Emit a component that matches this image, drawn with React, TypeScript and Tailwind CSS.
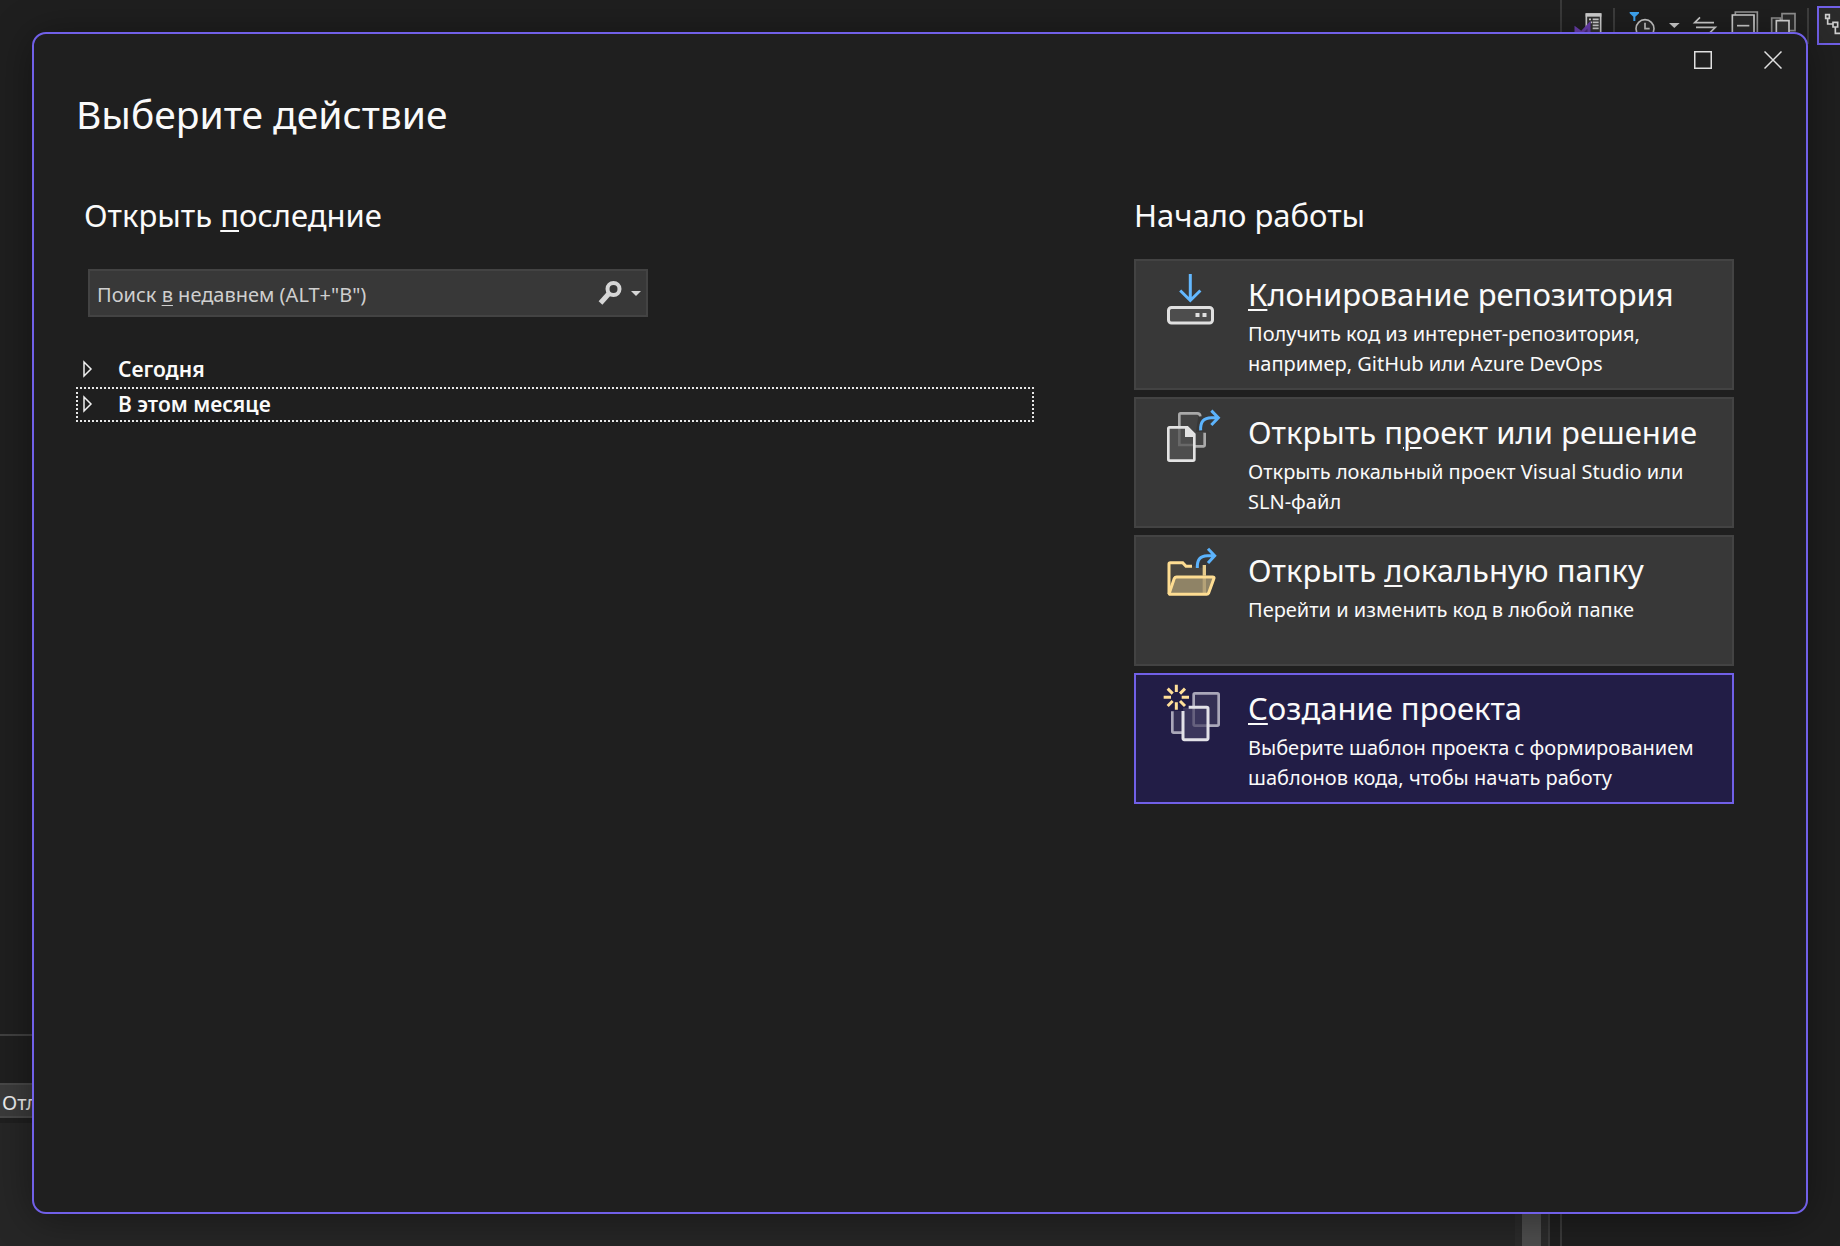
import { useState, type ReactNode } from 'react'

function Key({ children }: { children: ReactNode }) {
  return <span className="underline decoration-2 underline-offset-[3px]">{children}</span>
}

function CloneIcon() {
  return (
    <svg viewBox="0 0 60 60" className="h-[60px] w-[60px]" fill="none">
      <path d="M28.3 4v26.5M18.2 20.5l10.1 10 10.1-10" stroke="#63b8ff" strokeWidth="3" />
      <rect x="6.5" y="37.5" width="44" height="15.5" rx="3" fill="#4d4d4d" stroke="#e0e0e0" strokeWidth="3" />
      <path d="M33.5 43h4v4h-4zM40.5 43h4v4h-4z" fill="#e0e0e0" />
    </svg>
  )
}

function OpenProjectIcon() {
  return (
    <svg viewBox="36 24 180 180" className="h-[60px] w-[60px]" fill="none">
      <path d="M88 41h58l-8 55h26v43H88z" fill="#434343" />
      <path d="M151 49q-1-9-9-9H92q-4 0-4 4v92q0 3 3 3h70q3 0 3-3v-38" stroke="#a9a9a9" strokeWidth="8" />
      <path d="M55 87q0-4 4-4h52l21 20v74q0 4-4 4H59q-4 0-4-4z" fill="#4d4d4d" />
      <path d="M88 84v51h44" stroke="#686868" strokeWidth="8" />
      <path d="M55 86q0-4 4-4h53l21 21v75q0 4-4 4H59q-4 0-4-4z" stroke="#e3e3e3" strokeWidth="8" />
      <path d="M105 82h9l20 21v8h-29z" fill="#e3e3e3" />
      <path d="M152 91q-2-38 32-38h21M184 32l21 21-21 22" stroke="#5cb3fc" strokeWidth="9" />
    </svg>
  )
}

function OpenFolderIcon() {
  return (
    <svg viewBox="36 33 180 180" className="h-[60px] w-[60px]" fill="none">
      <path d="M57 84h41l10 10h55v30H76L57 176z" fill="#49463f" />
      <path d="M138 84h21v14h-21z" fill="#383838" />
      <path d="M163 90v32" stroke="#e5cb8c" strokeWidth="10" />
      <path d="M126 94h-18L98 83H61q-4 0-4 4v90" stroke="#fedd92" strokeWidth="9" />
      <path d="M76 126h116l-20 52H58z" fill="#8f8366" />
      <path d="M163 128v48" stroke="#b5a277" strokeWidth="10" />
      <path d="M80 126h108q5 0 4 4l-16 44q-2 4-6 4H61q-4 0-3-4l15-44q2-4 7-4z" stroke="#fedd92" strokeWidth="9" />
      <path d="M142 99q-2-37 30-37h22M174 41l20 21-20 22" stroke="#5cb3fc" strokeWidth="9" />
    </svg>
  )
}

function NewProjectIcon() {
  return (
    <svg viewBox="36 27 180 180" className="h-[60px] w-[60px]" fill="none">
      <path d="M68 108h30v64H68z" fill="#342f54" />
      <path d="M67 109v60q0 4 4 4h26" stroke="#aaa7b9" strokeWidth="8" />
      <rect x="131" y="55" width="75" height="97" rx="4" fill="#342f54" stroke="#aaa7b9" strokeWidth="8" />
      <rect x="99" y="98" width="75" height="96" rx="4" fill="#3b365c" />
      <path d="M131 98v50q0 4 4 4h39" stroke="#66617e" strokeWidth="8" />
      <path d="M116 97h54q4 0 4 4v89q0 4-4 4h-67q-4 0-4-4v-82" stroke="#e3e2e8" strokeWidth="9" />
      <path
        d="M79 51V29M79 82v22M63 67H41M95 67h22M68 56L53 41M90 56l15-15M68 78L53 93M90 78l15 15"
        stroke="#ffdf99"
        strokeWidth="9"
      />
    </svg>
  )
}

const actions = [
  {
    id: 'clone',
    icon: <CloneIcon />,
    title: <><Key>К</Key>лонирование репозитория</>,
    text: ['Получить код из интернет-репозитория,', 'например, GitHub или Azure DevOps'],
  },
  {
    id: 'project',
    icon: <OpenProjectIcon />,
    title: <>Открыть п<Key>р</Key>оект или решение</>,
    text: ['Открыть локальный проект Visual Studio или', 'SLN-файл'],
  },
  {
    id: 'folder',
    icon: <OpenFolderIcon />,
    title: <>Открыть <Key>л</Key>окальную папку</>,
    text: ['Перейти и изменить код в любой папке'],
  },
  {
    id: 'create',
    icon: <NewProjectIcon />,
    title: <><Key>С</Key>оздание проекта</>,
    text: ['Выберите шаблон проекта с формированием', 'шаблонов кода, чтобы начать работу'],
  },
]

const groups = ['Сегодня', 'В этом месяце']

function ToolbarSeparator() {
  return <span className="h-9 w-[2px] shrink-0 bg-[#3d3d3d]" />
}

function Toolbar() {
  return (
    <div className="flex h-[51px] items-center gap-2 overflow-hidden pl-[11px]">
      <button aria-label="Visual Studio" className="shrink-0">
        <svg viewBox="99 30 96 96" className="h-8 w-8" fill="none">
          <path d="M139 42h43v60h-43z" fill="#2f2f2f" stroke="#d0d0d0" strokeWidth="5" />
          <path d="M137 40h47v10h-47z" fill="#d0d0d0" />
          <path d="M147 58h6M158 58h18M152 67h4M158 67h18M158 76h18M158 85h18" stroke="#d0d0d0" strokeWidth="5" />
          <path d="M108 86l16 12 23-24v46l-23-20-16 12z" fill="#4c2f7d" stroke="#6b3fb0" strokeWidth="9" />
        </svg>
      </button>
      <ToolbarSeparator />
      <button aria-label="Фильтр" className="shrink-0">
        <svg viewBox="249 30 108 96" className="h-8 w-9" fill="none">
          <path d="M269 36h28v4l-11 10v13h-6V50l-11-10z" fill="#3fa7f5" />
          <circle cx="315" cy="86" r="27" fill="#2b2b2b" stroke="#c8c8c8" strokeWidth="5" />
          <path d="M315 68v18h14" stroke="#c8c8c8" strokeWidth="5" />
        </svg>
      </button>
      <button aria-label="Другие фильтры" className="shrink-0">
        <svg viewBox="381 30 42 96" className="h-8 w-[14px]">
          <path d="M387 69h32l-16 15z" fill="#cfcfcf" />
        </svg>
      </button>
      <button aria-label="Синхронизировать" className="shrink-0">
        <svg viewBox="447 30 96 96" className="h-8 w-8" fill="none" stroke="#d0d0d0" strokeWidth="5">
          <path d="M480 52l-16 16h58M468 82h58l-16 16" />
        </svg>
      </button>
      <button aria-label="Свернуть все" className="shrink-0">
        <svg viewBox="567 30 96 96" className="h-8 w-8" fill="none" stroke="#d0d0d0" strokeWidth="5">
          <path d="M586 44v-8h66v66h-8" stroke="#999999" />
          <path d="M577 45h65v66h-65z" fill="#2b2b2b" />
          <path d="M591 77h37" />
        </svg>
      </button>
      <button aria-label="Показать все файлы" className="shrink-0">
        <svg viewBox="687 30 90 96" className="h-8 w-[30px]" fill="none" strokeWidth="5">
          <path d="M695 54h26v50h-26z" fill="#2b2b2b" stroke="#8f8f8f" />
          <path d="M726 41h39v51h-39z" fill="#2b2b2b" stroke="#8f8f8f" />
          <path d="M709 62h38v52h-38z" fill="#333333" stroke="#d8d8d8" />
        </svg>
      </button>
      <ToolbarSeparator />
      <button aria-label="Вид" className="h-[39px] shrink-0 border-2 border-[#7160e8] bg-[#2b2b2b] px-[2px]">
        <svg viewBox="846 30 96 96" className="h-8 w-8" fill="none" stroke="#d0d0d0" strokeWidth="5">
          <path d="M860 44h11v11h-11zM882 67h14v14h-14zM866 55v17h16M889 81v19h14" />
        </svg>
      </button>
    </div>
  )
}

// The IDE window that stays visible around the dialog
function Ide() {
  return (
    <div className="absolute inset-0 flex gap-[10px] overflow-hidden bg-[#1f1f1f]">
      <div className="flex flex-1 items-end">
        <div className="flex-1">
          <div className="h-[49px] border-t-2 border-[#414141]" />
          <div className="mb-[5px] h-[35px] border-y-2 border-[#484848] bg-[#3b3b3b] pl-[2px] text-[20px] leading-[35px] text-[#f0f0f0]">
            Отладка
          </div>
          <div className="h-[123px] bg-[#262626]" />
        </div>
        <div className="flex h-[212px] w-[35px] justify-center border-r-2 border-[#3a3a3a] bg-[#2b2b2b]">
          <div className="w-[19px] bg-[#4d4d4d]" />
        </div>
      </div>
      <div className="w-[280px] border-l-2 border-[#3a3a3a]">
        <Toolbar />
      </div>
    </div>
  )
}

function Search() {
  const [query, setQuery] = useState('')

  return (
    <div className="relative ml-3 flex h-12 w-[560px] items-center border-2 border-[#434343] bg-[#383838] pr-1">
      <input
        id="recent-search"
        value={query}
        onChange={e => setQuery(e.target.value)}
        className="h-full min-w-0 flex-1 bg-transparent px-2 text-[20px] text-white outline-none"
      />
      {!query && (
        <label htmlFor="recent-search" className="absolute inset-y-0 left-[7px] cursor-text text-[20px] leading-[48px] text-[#cfcfcf]">
          Поиск <span className="underline decoration-1 underline-offset-[3px]">в</span> недавнем (ALT+"В")
        </label>
      )}
      <button aria-label="Найти">
        <svg viewBox="0 0 24 28" className="h-7 w-6" fill="none" stroke="#d6d6d6">
          <circle cx="15.5" cy="10" r="6" strokeWidth="4" />
          <path d="M11 14.500L2.500 24" strokeWidth="5" />
        </svg>
      </button>
      <button aria-label="Параметры поиска" className="ml-2">
        <svg viewBox="0 0 12 28" className="h-7 w-3">
          <path d="M1 12h10l-5 5z" fill="#d6d6d6" />
        </svg>
      </button>
    </div>
  )
}

function WindowButtons() {
  return (
    <div className="flex justify-end gap-1">
      <button aria-label="Развернуть" className="flex h-[52px] w-[66px] items-center justify-center">
        <svg viewBox="0 0 18 18" className="h-[18px] w-[18px]" fill="none" stroke="#e0e0e0" strokeWidth="1.500">
          <path d="M.75.75h16.500v16.500H.75z" />
        </svg>
      </button>
      <button aria-label="Закрыть" className="flex h-[52px] w-[66px] items-center justify-center">
        <svg viewBox="0 0 18 18" className="h-[18px] w-[18px]" fill="none" stroke="#e0e0e0" strokeWidth="1.500">
          <path d="M.5.5l17 17M17.500.5l-17 17" />
        </svg>
      </button>
    </div>
  )
}

export default function App() {
  const [group, setGroup] = useState('В этом месяце')
  const [action, setAction] = useState('create')

  return (
    <div className="relative flex min-h-screen p-8 font-['Noto_Sans','Open_Sans',sans-serif]">
      <Ide />
      <main className="relative flex-1 rounded-[14px] border-2 border-[#7160e8] bg-[#1f1f1f] text-[#fafafa] shadow-[0_4px_40px_rgba(0,0,0,0.4)]">
        <WindowButtons />
        <div className="pl-[42px] pr-[72px]">
          <h1 className="text-[39px] leading-[56px]">Выберите действие</h1>
          <div className="mt-[51px] flex gap-[100px]">
            <section className="min-w-0 flex-1">
              <h2 className="pl-2 text-[31px] leading-[44px]">
                Открыть <Key>п</Key>оследние
              </h2>
              <div className="mt-8">
                <Search />
              </div>
              <ul className="mt-[35px]">
                {groups.map(g => (
                  <li key={g}>
                    <button
                      onClick={() => setGroup(g)}
                      className={`flex h-[35px] w-full items-center gap-6 border-2 border-dotted pb-px pl-1 text-left text-[21px] leading-[30px] font-semibold ${
                        g === group ? 'border-[#e6e6e6]' : 'border-transparent'
                      }`}
                    >
                      <svg viewBox="0 0 12 18" className="h-[18px] w-3" fill="none" stroke="#f0f0f0" strokeWidth="1.500">
                        <path d="M2 2v14l7-7z" />
                      </svg>
                      {g}
                    </button>
                  </li>
                ))}
              </ul>
            </section>

            <section className="w-[600px]">
              <h2 className="text-[31px] leading-[44px]">Начало работы</h2>
              <div className="mt-[22px] flex flex-col gap-[7px]">
                {actions.map(a => (
                  <button
                    key={a.id}
                    onClick={() => setAction(a.id)}
                    className={`flex h-[131px] items-start gap-[26px] border-2 pl-[26px] pt-[9px] text-left ${
                      a.id === action ? 'border-[#7160e8] bg-[#221d46]' : 'border-[#434343] bg-[#383838]'
                    }`}
                  >
                    {a.icon}
                    <span className="flex flex-col">
                      <span className="text-[31px] leading-[49px]">{a.title}</span>
                      {a.text.map(line => (
                        <span key={line} className="whitespace-nowrap text-[20px] leading-[30px]">{line}</span>
                      ))}
                    </span>
                  </button>
                ))}
              </div>
            </section>
          </div>
        </div>
      </main>
    </div>
  )
}
